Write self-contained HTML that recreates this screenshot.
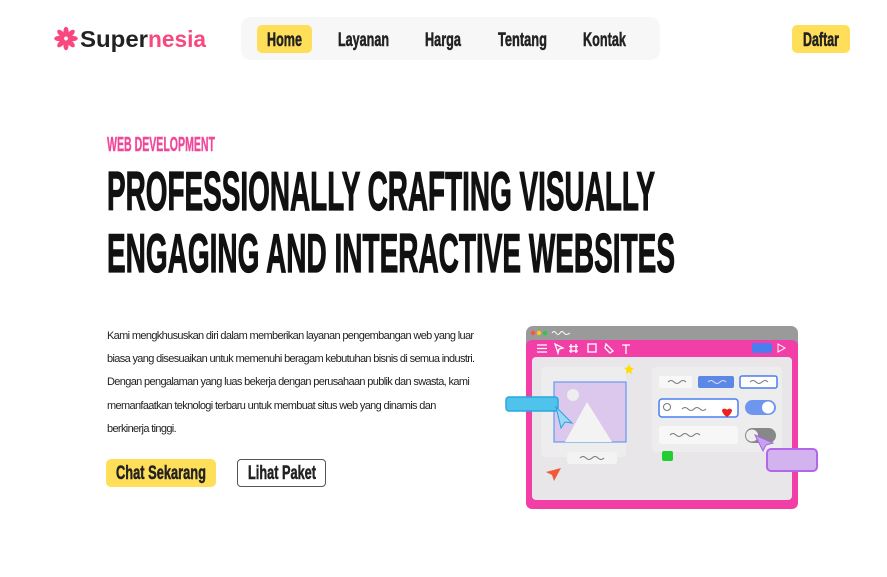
<!DOCTYPE html>
<html><head><meta charset="utf-8"><style>
body{margin:0;width:887px;height:577px;background:#fff;position:relative;overflow:hidden;font-family:"Liberation Sans",sans-serif}
.a{position:absolute}
svg text{font-family:"Liberation Sans Narrow","Liberation Sans",sans-serif;font-weight:bold}
.p{position:absolute;left:107px;top:325px;font-size:11px;letter-spacing:-0.65px;line-height:23.2px;color:#222;white-space:nowrap}
</style></head><body>
<div class="a" style="left:241px;top:17px;width:419px;height:43px;background:#f7f7f7;border-radius:10px"></div>
<div class="a" style="left:257px;top:25px;width:55px;height:28px;background:#ffde59;border-radius:5px"></div>
<div class="a" style="left:792px;top:25px;width:58px;height:28px;background:#ffde59;border-radius:5px"></div>
<div class="a" style="left:106px;top:459px;width:110px;height:28px;background:#ffde59;border-radius:5px"></div>
<div class="a" style="left:237px;top:459px;width:87px;height:26px;border:1px solid #555;border-radius:4px"></div>
<svg class="a" style="left:0;top:0" width="887" height="577">
<g fill="#f9477f" transform="translate(66,38.5)">
<g id="pt"><ellipse cx="0" cy="-6.8" rx="2.6" ry="5"/></g>
<use href="#pt" transform="rotate(45)"/><use href="#pt" transform="rotate(90)"/><use href="#pt" transform="rotate(135)"/><use href="#pt" transform="rotate(180)"/><use href="#pt" transform="rotate(225)"/><use href="#pt" transform="rotate(270)"/><use href="#pt" transform="rotate(315)"/>
</g>
<text x="80" y="47" font-size="23" style="font-family:'Liberation Sans';font-weight:bold" fill="#222" textLength="68" lengthAdjust="spacingAndGlyphs">Super</text>
<text x="148" y="47" font-size="23" style="font-family:'Liberation Sans';font-weight:bold" fill="#f9477f" textLength="58" lengthAdjust="spacingAndGlyphs">nesia</text>
<g fill="#222" font-size="19" stroke="#222" stroke-width="0.5">
<text x="267" y="46" textLength="35" lengthAdjust="spacingAndGlyphs">Home</text>
<text x="338" y="46" textLength="51" lengthAdjust="spacingAndGlyphs">Layanan</text>
<text x="425" y="46" textLength="36" lengthAdjust="spacingAndGlyphs">Harga</text>
<text x="498" y="46" textLength="49" lengthAdjust="spacingAndGlyphs">Tentang</text>
<text x="583" y="46" textLength="43" lengthAdjust="spacingAndGlyphs">Kontak</text>
<text x="803" y="46" textLength="36" lengthAdjust="spacingAndGlyphs">Daftar</text>
<text x="116" y="479" textLength="90" lengthAdjust="spacingAndGlyphs">Chat Sekarang</text>
<text x="248" y="479" textLength="68" lengthAdjust="spacingAndGlyphs">Lihat Paket</text>
</g>
<text x="107" y="151" font-size="20" fill="#f0479a" stroke="#f0479a" stroke-width="0.4" textLength="108" lengthAdjust="spacingAndGlyphs">WEB DEVELOPMENT</text>
<g fill="#111" stroke="#111" stroke-width="1.2">
<text x="107" y="210" font-size="55" textLength="548" lengthAdjust="spacingAndGlyphs">PROFESSIONALLY CRAFTING VISUALLY</text>
<text x="107" y="272" font-size="55" textLength="568" lengthAdjust="spacingAndGlyphs">ENGAGING AND INTERACTIVE WEBSITES</text>
</g>
<!-- illustration -->
<rect x="526" y="326" width="272" height="30" rx="7" fill="#9a9a9a"/>
<circle cx="533" cy="333" r="2.2" fill="#ff5050"/><circle cx="539" cy="333" r="2.2" fill="#ffcc00"/><circle cx="545" cy="333" r="2.2" fill="#22cc44"/>
<path d="M552 333q2-3 4 0t4 0t4 0t6 0" stroke="#fff" fill="none"/>
<rect x="526" y="340" width="272" height="169" rx="6" fill="#f23fa8"/>
<rect x="532" y="357" width="260" height="143" rx="4" fill="#e8e6e8"/>
<g stroke="#fff" stroke-width="1.3" fill="none">
<path d="M537 345h10M537 348.5h10M537 352h10"/><rect x="588" y="344" width="8" height="8"/><path d="M622 345h8M626 345v9"/><path d="M571 344v9M576 344v9M569 346.5h9M569 351h9"/><path d="M555 344l8 4-4 1-1 4z"/><path d="M606 344l7 7-3 2-5-5z"/>
</g>
<rect x="752" y="343" width="20" height="10" rx="2" fill="#4a7ef0"/><path d="M778 344l7 4-7 4z" stroke="#fff" fill="none"/>
<rect x="541" y="367" width="85" height="90" rx="4" fill="#ededed"/>
<rect x="554" y="382" width="72" height="60" fill="#dcc8ec" stroke="#4a8ef0"/>
<circle cx="573" cy="395" r="6" fill="#eee"/><path d="M565 442l22-40 25 40z" fill="#f3f3f3"/>
<rect x="567" y="452" width="50" height="12" rx="3" fill="#f3f3f3"/>
<rect x="652" y="367" width="130" height="85" rx="4" fill="#ededed"/>
<rect x="659" y="376" width="33" height="12" rx="2" fill="#f7f7f7"/>
<rect x="698" y="376" width="36" height="12" rx="2" fill="#5b87e6"/>
<rect x="740" y="376" width="37" height="12" rx="2" fill="#fff" stroke="#4a7ef0" stroke-width="1.5"/>
<rect x="659" y="399" width="79" height="18" rx="3" fill="#fff" stroke="#4a7ef0" stroke-width="1.5"/>
<rect x="745" y="400" width="31" height="15" rx="7.5" fill="#6f96ee"/><circle cx="768" cy="407.5" r="6" fill="#fff"/>
<rect x="659" y="426" width="79" height="18" rx="3" fill="#f7f7f7"/>
<rect x="745" y="428" width="31" height="15" rx="7.5" fill="#888"/><circle cx="752" cy="435.5" r="6" fill="#eee"/>
<path d="M722 410a3 3 0 0 1 5 0 3 3 0 0 1 5 0c0 4-5 7-5 7s-5-3-5-7z" fill="#ee2020"/>
<path d="M629 364l1.5 3.5 3.5.5-2.7 2.4.8 3.6-3.1-1.9-3.1 1.9.8-3.6-2.7-2.4 3.5-.5z" fill="#ffdd00"/>
<rect x="662" y="451" width="11" height="10" rx="2" fill="#22cc33"/>
<rect x="506" y="397" width="52" height="14" rx="3" fill="#4fc3ec" stroke="#2aa7dd" stroke-width="1.5"/>
<path d="M556 407l16 16-7-1-4 6z" fill="#9ad8f5" stroke="#29a0e0"/>
<path d="M561 468l-15 4 6 3 2 6z" fill="#f05a3a"/>
<path d="M755 435l18 8-7 2-3 6z" fill="#c9a0ef" stroke="#a466e0"/>
<rect x="767" y="449" width="50" height="22" rx="4" fill="#d3b2f0" stroke="#b068e8" stroke-width="2"/>
<g stroke="#777" fill="none" stroke-width="1"><path d="M580 458q3-3 6 0t6 0t6 0t6 0"/><path d="M668 382q3-3 6 0t6 0t6 0"/><path d="M708 382q3-3 6 0t6 0t6 0" stroke="#dde"/><path d="M750 382q3-3 6 0t6 0t6 0"/><path d="M682 409q3-3 6 0t6 0t6 0t6 0"/><path d="M670 435q3-3 6 0t6 0t6 0t6 0t6 0"/><circle cx="667" cy="407" r="3.5"/></g>
</svg>
<div class="p">Kami mengkhususkan diri dalam memberikan layanan pengembangan web yang luar<br>biasa yang disesuaikan untuk memenuhi beragam kebutuhan bisnis di semua industri.<br>Dengan pengalaman yang luas bekerja dengan perusahaan publik dan swasta, kami<br>memanfaatkan teknologi terbaru untuk membuat situs web yang dinamis dan<br>berkinerja tinggi.</div>
</body></html>
